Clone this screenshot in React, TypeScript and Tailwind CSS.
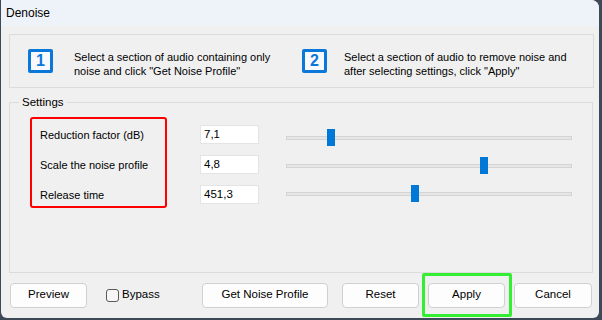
import React from 'react';

const font = { fontFamily: '"Liberation Sans", Arial, sans-serif' };

function StepIcon({ n }: { n: string }) {
  return (
    <div className="flex h-[24px] w-[25px] shrink-0 items-center justify-center rounded-[2px] border-[3px] border-[#0a78d8] bg-[#f7f9fc] text-[16px] font-bold leading-none text-[#0a78d8]">
      {n}
    </div>
  );
}

function Slider({ pos }: { pos: string }) {
  return (
    <div className="relative flex h-[28px] w-[286px] items-center">
      <div className="h-[4px] w-full border border-[#d4d4d4] bg-[#e6e6e6]" />
      <div className={`absolute top-[5px] h-[17px] w-[8px] bg-[#0078d7] ${pos}`} />
    </div>
  );
}

function Btn({ label, w }: { label: string; w: string }) {
  return (
    <button className={`h-[25px] ${w} rounded-[4px] border border-[#d0d0d0] bg-[#fdfdfd] text-[11.5px] text-black`}>
      {label}
    </button>
  );
}

export default function App() {
  const rows = [
    { label: 'Reduction factor (dB)', value: '7,1' },
    { label: 'Scale the noise profile', value: '4,8' },
    { label: 'Release time', value: '451,3' },
  ];

  return (
    <div className="h-[320px] w-[602px] bg-[#3d4957] pb-[2px] pl-[1px] pr-[3px]" style={font}>
      <div className="flex h-[318px] flex-col overflow-hidden rounded-b-[6px] rounded-tr-[8px] bg-[#f0f0f0] text-[11px] text-black">
        {/* Title bar */}
        <div className="flex h-[26px] shrink-0 items-center bg-[#eef3f9] pl-[5px] text-[12px]">Denoise</div>

        <div className="flex flex-col pl-[8px] pr-[5px]">
          {/* Steps */}
          <div className="mt-[8px] flex h-[54px] border border-[#dcdcdc] pl-[18px] pt-[14px]">
            <div className="flex w-[274px] items-start">
              <StepIcon n="1" />
              <div className="ml-[21px] mt-[1px] leading-[14px]">
                Select a section of audio containing only
                <br />
                noise and click "Get Noise Profile"
              </div>
            </div>
            <div className="flex items-start">
              <StepIcon n="2" />
              <div className="ml-[17px] mt-[1px] leading-[14px]">
                Select a section of audio to remove noise and
                <br />
                after selecting settings, click "Apply"
              </div>
            </div>
          </div>

          {/* Settings */}
          <fieldset className="mt-[7px] h-[178px] w-[584px] border border-[#dcdcdc] pt-[8px]">
            <legend className="ml-[9px] px-[3px] text-[11.5px] leading-[14px]">Settings</legend>
            <div className="flex items-start pl-[20px]">
              <div className="flex w-[137px] flex-col gap-[10px] rounded-[3px] border-2 border-[#ff0000] pb-[1px] pl-[8px] pt-[6px]">
                {rows.map((r) => (
                  <div key={r.label} className="flex h-[20px] items-center">
                    {r.label}
                  </div>
                ))}
              </div>
              <div className="ml-[33px] flex flex-col gap-[11px] pt-[8px]">
                {rows.map((r) => (
                  <div
                    key={r.value}
                    className="flex h-[19px] w-[59px] items-center border border-[#e4e4e4] bg-white pl-[3px] text-[11.5px]"
                  >
                    {r.value}
                  </div>
                ))}
              </div>
              <div className="ml-[27px] flex flex-col pt-[7px]">
                <Slider pos="left-[41px]" />
                <Slider pos="left-[194px]" />
                <Slider pos="left-[125px]" />
              </div>
            </div>
          </fieldset>
        </div>

        {/* Buttons */}
        <div className="flex h-[44px] items-center pl-[9px]">
          <Btn label="Preview" w="w-[77px]" />
          <div className="ml-[19px] flex w-[96px] items-center">
            <div className="h-[13px] w-[13px] rounded-[3px] border border-[#5a5a5a] bg-[#f6f6f6]" />
            <span className="ml-[3px] text-[11.5px]">Bypass</span>
          </div>
          <Btn label="Get Noise Profile" w="w-[126px]" />
          <div className="ml-[14px]">
            <Btn label="Reset" w="w-[77px]" />
          </div>
          <div className="ml-[3px] flex h-[44px] w-[90px] items-center rounded-[2px] border-[3px] border-[#33ee33] pl-[3px]">
            <Btn label="Apply" w="w-[77px]" />
          </div>
          <div className="ml-[2px]">
            <Btn label="Cancel" w="w-[78px]" />
          </div>
        </div>
      </div>
    </div>
  );
}
